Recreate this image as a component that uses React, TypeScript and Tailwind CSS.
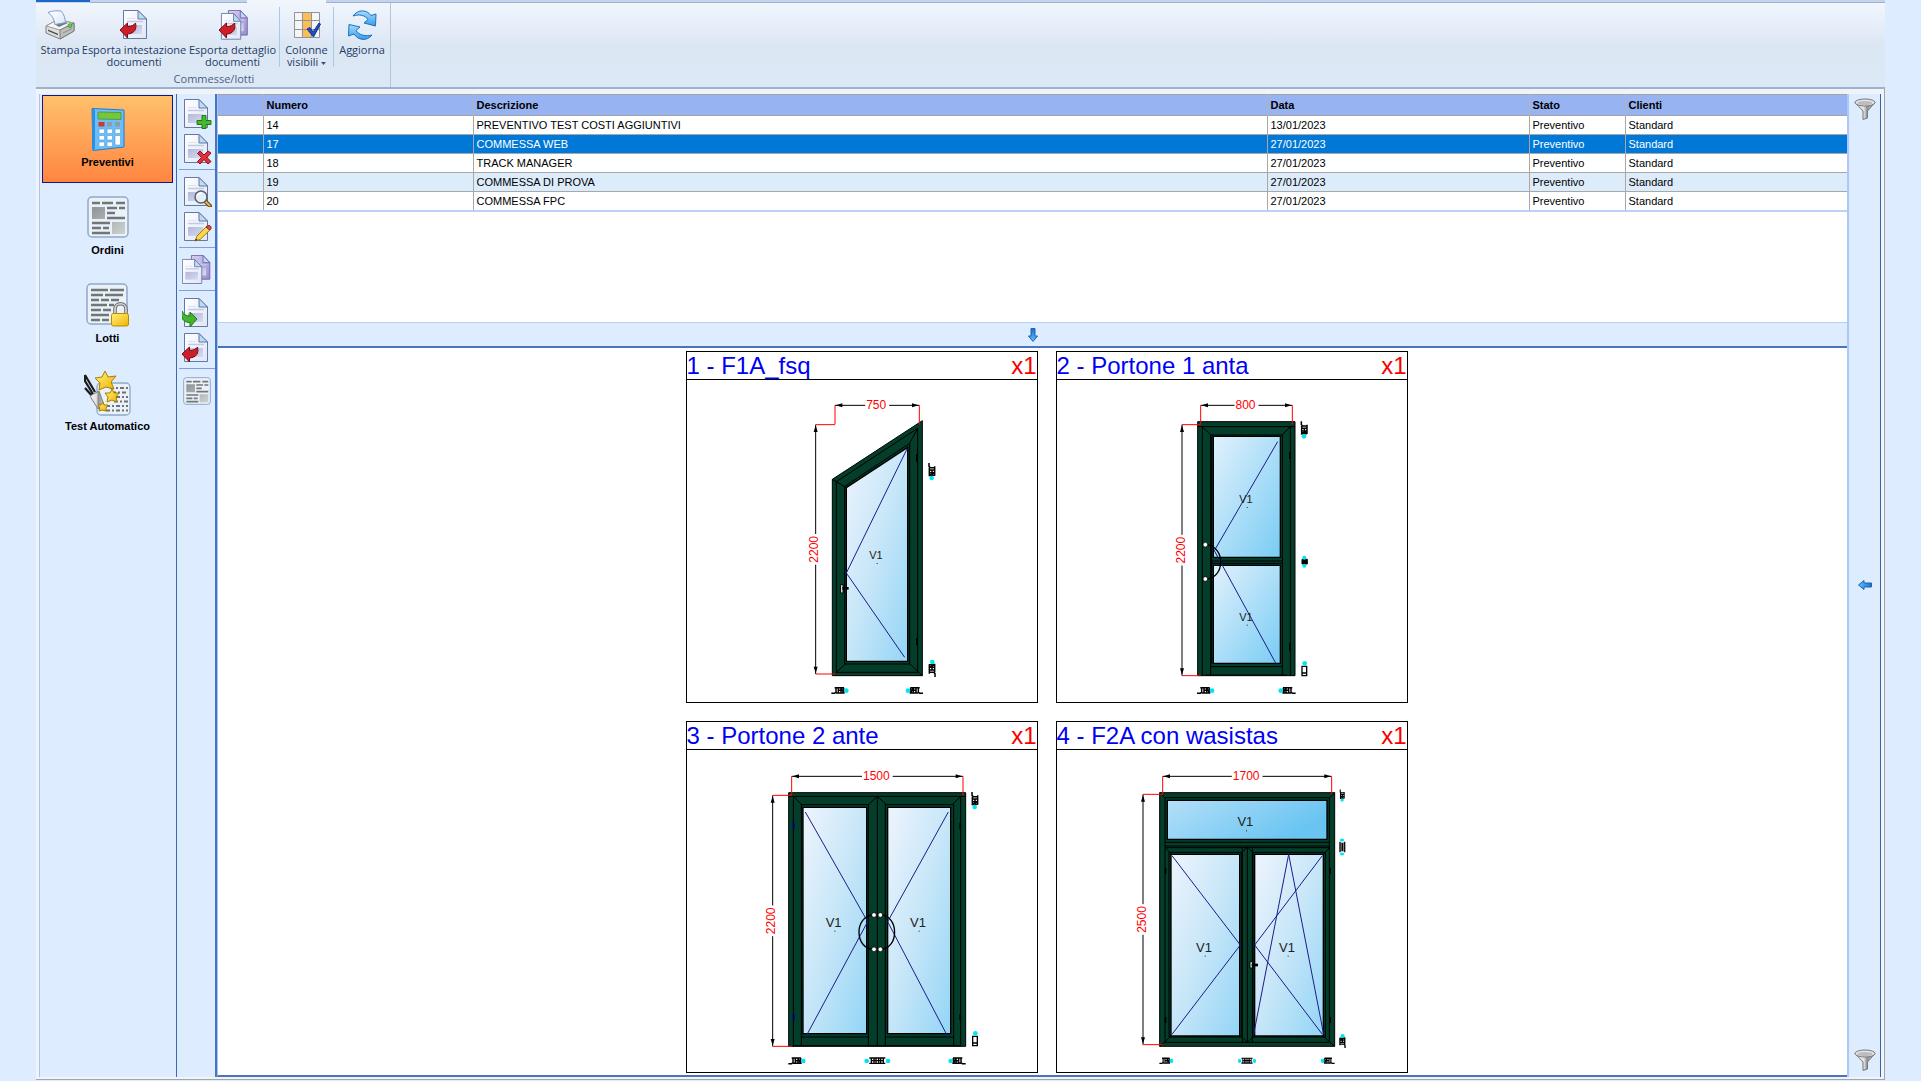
import React, { useState } from "react";

/* ---------- shared gradients ---------- */

function Defs() {
  return (
    <svg width="0" height="0" className="absolute" aria-hidden="true">
      <defs>
        <linearGradient id="paper" x1="0" y1="0" x2="1" y2="1">
          <stop offset="0" stopColor="#ffffff" />
          <stop offset="1" stopColor="#dfe6f6" />
        </linearGradient>
        <linearGradient id="violet" x1="0" y1="0" x2="1" y2="1">
          <stop offset="0" stopColor="#d9d0f2" />
          <stop offset="1" stopColor="#9d8bd0" />
        </linearGradient>
        <linearGradient id="block" x1="0" y1="0" x2="1" y2="1">
          <stop offset="0" stopColor="#b3b8da" />
          <stop offset="1" stopColor="#d6daf0" />
        </linearGradient>
        <linearGradient id="sky" x1="0" y1="0" x2="0" y2="1">
          <stop offset="0" stopColor="#a4dcff" />
          <stop offset="1" stopColor="#3a9bea" />
        </linearGradient>
        <linearGradient id="arrowBlue" x1="0" y1="0" x2="0" y2="1">
          <stop offset="0" stopColor="#1f6fc4" />
          <stop offset="1" stopColor="#5cc0ff" />
        </linearGradient>
        <linearGradient id="metal" x1="0" y1="0" x2="1" y2="0">
          <stop offset="0" stopColor="#f4f4f4" />
          <stop offset="0.45" stopColor="#e2e2e2" />
          <stop offset="0.6" stopColor="#8e8e8e" />
          <stop offset="1" stopColor="#d4d4d4" />
        </linearGradient>
        <linearGradient id="gold" x1="0" y1="0" x2="1" y2="1">
          <stop offset="0" stopColor="#fff27a" />
          <stop offset="1" stopColor="#f2b200" />
        </linearGradient>
        <linearGradient id="grayBlock" x1="0" y1="0" x2="1" y2="1">
          <stop offset="0" stopColor="#8f9596" />
          <stop offset="1" stopColor="#cdd1d2" />
        </linearGradient>
        <linearGradient id="glass" x1="0" y1="0" x2="1" y2="1">
          <stop offset="0" stopColor="#eef4fd" />
          <stop offset="0.5" stopColor="#c6e6f8" />
          <stop offset="1" stopColor="#93d5f6" />
        </linearGradient>
        <linearGradient id="glassDeep" x1="0" y1="0" x2="1" y2="1">
          <stop offset="0" stopColor="#e2f1fc" />
          <stop offset="1" stopColor="#78ccf4" />
        </linearGradient>
        <linearGradient id="glassTop" x1="0" y1="0" x2="1" y2="0.4">
          <stop offset="0" stopColor="#b4dff8" />
          <stop offset="1" stopColor="#69c4f2" />
        </linearGradient>
      </defs>
    </svg>
  );
}

/* ---------- icons ---------- */

function Sheet({ violet = false }: { violet?: boolean }) {
  const edge = violet ? "#6a58a8" : "#6577a3";
  return (
    <g>
      <path d="M.5.5H15L23.500 9V28.500H.5z" fill={violet ? "url(#violet)" : "url(#paper)"} stroke={edge} />
      <path d="M15 .5V9h8.500z" fill="#b9ddf4" stroke={edge} />
      <path d="M4 11.500h16" stroke="#c3c9e4" strokeWidth="1.500" />
      <path d="M4 8.500h8" stroke="#dde1f0" />
      <path d="M4 15h15v9H4z" fill="url(#block)" />
    </g>
  );
}

function RedArrow() {
  return (
    <path
      d="M.5 8 8 1v3.500c4 0 6-1 8-3.500 1.500 6-1 10.500-8 11V16z"
      fill="#cc1f2a"
      stroke="#7c0a14"
      strokeLinejoin="round"
    />
  );
}

function GreenArrow() {
  return (
    <path
      d="M16 9 9 2v4C5 6 2.500 4.500 1 1-.5 8 2 12.500 9 12.500V17z"
      fill="#42b52c"
      stroke="#1f7a17"
      strokeLinejoin="round"
    />
  );
}

function ToolIcon({ kind }: { kind: string }) {
  if (kind === "news") return <NewsIcon className="size-7" />;
  return (
    <svg viewBox="0 0 30 30" className="size-[30px]" aria-hidden="true">
      {kind === "copy" ? (
        <>
          <g transform="translate(9 0) scale(.8 .85)">
            <Sheet violet />
          </g>
          <g transform="translate(0 4) scale(.84 .86)">
            <Sheet />
          </g>
        </>
      ) : (
        <g transform="translate(2 0)">
          <Sheet />
        </g>
      )}
      {kind === "add" && (
        <path d="M20 16.500h4v5h5v4h-5v4h-4v-4h-5v-4h5z" fill="#45bb2b" stroke="#1c7a17" />
      )}
      {kind === "delete" && (
        <path
          d="m18 17 4 4 4-4 3 2-4 4.500 4 4-3 2.500-4-4.500-4 4.500-2.500-2.500 4-4-4-4z"
          fill="#e0303a"
          stroke="#93101a"
        />
      )}
      {kind === "search" && (
        <>
          <path d="m23 24 5 5" stroke="#6b4a18" strokeWidth="4" strokeLinecap="round" />
          <path d="m23.500 24.500 4 4" stroke="#e8b048" strokeWidth="2" strokeLinecap="round" />
          <circle cx="19" cy="20" r="6" fill="#e4effb" stroke="#59616b" strokeWidth="1.500" />
          <path d="M15.500 19c.5-2 2-3 4-3" stroke="#fff" strokeWidth="1.500" fill="none" />
        </>
      )}
      {kind === "edit" && (
        <>
          <path d="m13 29 2-5L25 14l3.500 3.500L18 27.500z" fill="#f9d84a" stroke="#a8780a" />
          <path d="m24 15 2-1.500c2-.5 3.500 1 3 3L27.500 18z" fill="#d94a4a" stroke="#8c2222" />
          <path d="m13 29 1-2.500 1.500 1.500z" fill="#333" />
        </>
      )}
      {kind === "import" && (
        <g transform="translate(-1 12)">
          <GreenArrow />
        </g>
      )}
      {kind === "export" && (
        <g transform="translate(-.5 13)">
          <RedArrow />
        </g>
      )}
    </svg>
  );
}

function PrinterIcon() {
  return (
    <svg viewBox="0 0 30 30" className="size-[30px]" aria-hidden="true">
      <path d="M1 16 12 10l17 3v8L15 29 1 23z" fill="#dedede" stroke="#808080" strokeLinejoin="round" />
      <path d="M1 16 12 10l17 3-14 7z" fill="#f7f7f7" stroke="#9a9a9a" strokeLinejoin="round" />
      <path d="m15 20 14-7v8l-14 8z" fill="#bdbdbd" stroke="#7c7c7c" strokeLinejoin="round" />
      <path d="m9 14 10-2.500 4 1.500-9 4z" fill="#6f7b86" />
      <path d="M10 14.500C9 9 7 5 3 2.500 8 .5 12 .5 16 1c3 3 4 7 4.500 11.500z" fill="url(#paper)" stroke="#7aa2cf" strokeLinejoin="round" />
      <path d="m3 19.500 10 4.300v1.500L3 21z" fill="#4f4f4f" />
      <path d="m18 23 9-4.500" stroke="#8d8d8d" />
      <circle cx="25" cy="15.500" r="2" fill="#5ccf3a" stroke="#2d8a1d" strokeWidth=".6" />
    </svg>
  );
}

function ExportHeadIcon() {
  return (
    <svg viewBox="0 0 30 30" className="size-[30px]" aria-hidden="true">
      <g transform="translate(4 0)">
        <Sheet />
      </g>
      <g transform="translate(.5 12)">
        <RedArrow />
      </g>
    </svg>
  );
}

function ExportDetailIcon() {
  return (
    <svg viewBox="0 0 30 30" className="size-[30px]" aria-hidden="true">
      <g transform="translate(10 0) scale(.82 .88)">
        <Sheet violet />
      </g>
      <g transform="translate(3 3) scale(.84 .92)">
        <Sheet />
      </g>
      <g transform="translate(.5 12)">
        <RedArrow />
      </g>
    </svg>
  );
}

function ColumnsIcon() {
  return (
    <svg viewBox="0 0 30 30" className="size-[30px]" aria-hidden="true">
      <path d="M2 2h26v26H2z" fill="#f5f6f8" />
      <path d="M11 2h8v26h-8z" fill="#fbbd55" />
      <path d="M2.500 2.500h25v25h-25zM10.500 2v26M19.500 2v26M2 10.500h26M2 19.500h26" fill="none" stroke="#8f939b" />
      <path d="m15 19 3-1.500 3 4.500 6-9 1.500 1L21.500 27z" fill="#1d50c4" stroke="#0f3390" />
    </svg>
  );
}

function RefreshIcon() {
  return (
    <svg viewBox="0 0 30 30" className="size-[30px]" aria-hidden="true">
      <path
        d="M6 6C11-1 20-.5 24 5.500L29 4l-.5 12L17 13l4-3.500C18 5 12 4 6 6z"
        fill="url(#sky)"
        stroke="#1d6fc0"
        strokeLinejoin="round"
      />
      <path
        d="M25 25c-5 6.500-14 5.500-18-1L1.500 26 2 14.500 13 17l-4 3.500c3 5 10 6 16 4.500z"
        fill="url(#sky)"
        stroke="#1d6fc0"
        strokeLinejoin="round"
      />
    </svg>
  );
}

function CalculatorIcon() {
  const keys = [0, 1, 2];
  return (
    <svg viewBox="0 0 34 44" className="h-11 w-[34px]" aria-hidden="true">
      <path d="M1 1.500 33 3v37L2 43.500z" fill="#6dbdf8" stroke="#1b7cd0" />
      <path d="M1 1.500 4 3v39l-3 1z" fill="#2b8fe2" />
      <path d="M7 5 30 5.500v7L7 12z" fill="#76c63c" stroke="#3f8d28" strokeWidth=".7" />
      <path d="M7.500 15h6v4.500h-6z" fill="#cc3a2a" />
      <path d="M16 15h5v4.500h-5zM24 15h5v4.500h-5z" fill="#8f9dab" />
      {keys.map((r) =>
        keys.map((c) =>
          r > 0 && c === 2 ? null : (
            <rect key={r + "-" + c} x={8 + c * 8} y={22 + r * 6.5} width="5.500" height="4.500" rx="1" fill="#fff" stroke="#3d8ed6" strokeWidth=".5" />
          ),
        ),
      )}
      <rect x="24" y="28.500" width="5.500" height="9.500" rx="1" fill="#fff" stroke="#3d8ed6" strokeWidth=".5" />
    </svg>
  );
}

function NewsIcon({ className }: { className: string }) {
  return (
    <svg viewBox="0 0 42 42" className={className} aria-hidden="true">
      <rect x="1" y="1" width="40" height="40" rx="4" fill="#eaf1f8" stroke="#8fa9c8" strokeWidth="1.500" />
      <path
        d="M5 7h8M15 7h11M29 7h9M20 12h10M32 12h6M20 17h8M20 22h18M5 27h18M5 32h9M16 32h6M5 37h18"
        stroke="#707778"
        strokeWidth="2.400"
      />
      <path d="M5 11h13v12H5zM25 26h13v12H25z" fill="url(#grayBlock)" />
    </svg>
  );
}

function LotsIcon() {
  return (
    <svg viewBox="0 0 44 44" className="size-11" aria-hidden="true">
      <rect x="1" y="1" width="40" height="40" rx="4" fill="#eaf1f8" stroke="#8fa9c8" strokeWidth="1.500" />
      <path
        d="M5 7h17M24 7h14M5 12h12M19 12h18M5 17h8M15 17h8M25 17h8M5 22h16M23 22h5M5 27h10M17 27h8M5 32h18M5 37h9M16 37h7"
        stroke="#707778"
        strokeWidth="2.400"
      />
      <path d="M29 31v-5c0-7 11-7 11 0v5" fill="none" stroke="#6f6f6f" strokeWidth="3.600" />
      <path d="M29 31v-5c0-7 11-7 11 0v5" fill="none" stroke="#d8d8d8" strokeWidth="1.600" />
      <rect x="25.500" y="30.500" width="17" height="12.500" rx="2" fill="url(#gold)" stroke="#b98a00" />
    </svg>
  );
}

function AutoTestIcon() {
  return (
    <svg viewBox="0 0 47 46" className="h-[46px] w-[47px]" aria-hidden="true">
      <rect x="13" y="13" width="33" height="32" rx="4" fill="#eaf1f8" stroke="#8fa9c8" strokeWidth="1.300" />
      <path
        d="M26 18h18M28 22.500h16M32 27h12M30 31.500h14M22 36h22M22 40.500h22"
        stroke="#6d7475"
        strokeWidth="2"
        strokeDasharray="4 2 2 2"
      />
      <path d="m1 5 10 17M1 18l8 9M1 5v6l8 13" stroke="#1c1c1c" strokeWidth="2.200" fill="none" />
      <path d="m6 26 9-5 5 14-6 4z" fill="url(#metal)" stroke="#7d7d7d" />
      <path d="m21 1 3 6 8-1-5 6 3 7-8-2-7 3 1-7-5-5 7-1z" fill="url(#gold)" stroke="#ab7f00" strokeLinejoin="round" />
      <path d="m28 19 2 4 5 0-3 4 1 5-5-2-5 2 1-5-3-4 5 0z" fill="url(#gold)" stroke="#ab7f00" strokeLinejoin="round" />
      <path d="m19 32 1 3 4 0-2 3 0 3-4-1-3 1 1-3-2-3 3 0z" fill="url(#gold)" stroke="#ab7f00" strokeLinejoin="round" />
    </svg>
  );
}

function FunnelIcon() {
  return (
    <svg viewBox="0 0 22 23" className="h-[23px] w-[22px]" aria-hidden="true">
      <path d="M1 4.500 9 13v8.500l4.500-1.500v-7L21 4.500z" fill="url(#metal)" stroke="#777" />
      <ellipse cx="11" cy="4.500" rx="10" ry="3.500" fill="#e6e6e6" stroke="#777" />
      <ellipse cx="11" cy="5" rx="7.500" ry="2" fill="#bdbdbd" />
    </svg>
  );
}

function BlueArrow({ left = false }: { left?: boolean }) {
  return (
    <svg viewBox="0 0 10 14" className={left ? "h-3.5 w-2.5 rotate-90" : "h-3.5 w-2.5"} aria-hidden="true">
      <path d="M3 .5h4V8h2.500L5 13.500.5 8H3z" fill="url(#arrowBlue)" stroke="#1c63b4" />
    </svg>
  );
}

/* ---------- window drawings (three drawing units per screen pixel) ---------- */

const GREEN = "#053d2b";
const NAVY = "#1c1c8c";

function Frame({ d, w = 3 }: { d: string; w?: number }) {
  return <path d={d} fill={GREEN} stroke="#000" strokeWidth={w} />;
}

function Pane({ d, deep = false }: { d: string; deep?: boolean }) {
  return <path d={d} fill={deep ? "url(#glassDeep)" : "url(#glass)"} stroke="#000" strokeWidth="4" />;
}

function Seam({ d }: { d: string }) {
  return <path d={d} fill="none" stroke="#000" strokeWidth="3" />;
}

function Opening({ d }: { d: string }) {
  return <path d={d} fill="none" stroke={NAVY} strokeWidth="3" />;
}

function GlassLabel({ x, y, size = 39 }: { x: number; y: number; size?: number }) {
  return (
    <g>
      <text x={x} y={y} fontSize={size} textAnchor="middle" fill="#222">
        V1
      </text>
      <rect x={x + 2} y={y + 12} width="3" height="3" fill="#222" />
    </g>
  );
}

function WidthDim({ x1, x2, y, drop, label }: { x1: number; x2: number; y: number; drop: number; label: string }) {
  const mid = (x1 + x2) / 2;
  const half = label.length * 10 + 6;
  return (
    <g>
      <path d={`M${x1} ${y}H${mid - half}M${mid + half} ${y}H${x2}`} stroke="#000" strokeWidth="3" />
      <path d={`M${x1 + 2} ${y}l20-6v12zM${x2 - 2} ${y}l-20-6v12z`} />
      <path d={`M${x1} ${y}V${drop}M${x2} ${y}V${drop}`} stroke="#f00" strokeWidth="3" />
      <text x={mid - 3} y={y + 10} fontSize="36" textAnchor="middle" fill="#f00">
        {label}
      </text>
    </g>
  );
}

function HeightDim({ x, y1, y2, reach, label }: { x: number; y1: number; y2: number; reach: number; label: string }) {
  const mid = (y1 + y2) / 2;
  return (
    <g>
      <path d={`M${x} ${y1}V${mid - 46}M${x} ${mid + 46}V${y2}`} stroke="#000" strokeWidth="3" />
      <path d={`M${x} ${y1 + 2}l-6 20h12zM${x} ${y2 - 2}l-6-20h12z`} />
      <path d={`M${x} ${y1}H${reach}M${x} ${y2}H${reach}`} stroke="#f00" strokeWidth="3" />
      <text transform={`translate(${x + 8} ${mid}) rotate(-90)`} fontSize="36" textAnchor="middle" fill="#f00">
        {label}
      </text>
    </g>
  );
}

/* Profile cross-section seen from the end, with its gasket dots. */
function Profile({ x, y, turn = 0, flip = false, kind = "full" }: { x: number; y: number; turn?: number; flip?: boolean; kind?: "full" | "plain" | "mid" }) {
  return (
    <g transform={`translate(${x} ${y}) rotate(${turn}) scale(${flip ? -1 : 1} 1)`}>
      {kind === "mid" ? (
        <>
          <path d="M-24-8h48M-24 8h48M-18-8v16M-10-8v16M-4-8v16M4-8v16M10-8v16M18-8v16M-18 0h36" stroke="#000" strokeWidth="4" />
          <circle cx="-32" cy="1" r="7" fill="#00e5f0" />
        </>
      ) : kind === "plain" ? (
        <path d="M-18-7h28v14h-28zM-10-7v14" fill="none" stroke="#000" strokeWidth="4" />
      ) : (
        <path
          d="M-26 9h10l5-5M-16-8h28M-12 8h26M-12-8V8M-5-8V8M-5 0h8M3-8V8M3-8l8 16M11-8V8"
          fill="none"
          stroke="#000"
          strokeWidth="4.500"
        />
      )}
      <circle cx={kind === "mid" ? 32 : 19} cy="1" r="7" fill="#00e5f0" />
    </g>
  );
}

function Drawing({ top, title, children }: { top: number; title: string; children: React.ReactNode }) {
  return (
    <svg
      viewBox={`24 ${top} 1050 966`}
      className="block h-[322px] w-full"
      fontFamily="Liberation Sans, Arial, sans-serif"
      role="img"
      aria-label={title}
    >
      {children}
    </svg>
  );
}

function SlantedWindow() {
  return (
    <>
      <Frame d="M460 403 730 227V992H460z" />
      <Seam d="M472 410 716 250V982H472zM460 403l40 24M472 982l28-26M716 250l-24 45M730 992l-38-36" />
      <Seam d="M497 424 692 295V957H497z" />
      <Pane d="M502 428 686 307V949H502z" />
      <Opening d="M684 312 502 684 677 937" />
      <GlassLabel x={591} y={642} size={33} />
      <path d="M485 719h7v25h-7z" fill="#fff" stroke="#000" strokeWidth="3" />
      <path d="M490 726h19v8h-19z" />
      <path d="M711 328h5v22h-5zM711 880h5v20h-5z" />
      <WidthDim x1={468} x2={721} y={181} drop={238} label="750" />
      <HeightDim x={410} y1={239} y2={987} reach={468} label="2200" />
      <Profile x={759} y={380} turn={90} />
      <Profile x={759} y={970} turn={-90} />
      <Profile x={483} y={1036} />
      <Profile x={706} y={1036} flip />
    </>
  );
}

function SingleDoor() {
  return (
    <>
      <Frame d="M446 230H738V992H446z" />
      <Seam d="M446 245H738M460 245V992M724 245V992M460 245l25 25M724 245l-25 25M485 270H700V990M485 270V990M470 990H714" />
      <Pane deep d="M493 274H694V637H493z" />
      <Pane deep d="M493 661H694V955H493z" />
      <Seam d="M485 648H700M485 655H700M485 965H700M488 274V955" />
      <Opening d="M686 290 496 617 686 965" />
      <GlassLabel x={591} y={474} size={33} />
      <GlassLabel x={591} y={827} size={33} />
      <path d="M470 600C530 600 530 702 470 702" fill="none" stroke="#000" strokeWidth="4" />
      <circle cx="469" cy="599" r="7" fill="#fff" stroke="#000" strokeWidth="2" />
      <circle cx="469" cy="702" r="7" fill="#fff" stroke="#000" strokeWidth="2" />
      <path d="M720 320h4v22h-4zM720 895h4v22h-4z" />
      <WidthDim x1={455} x2={730} y={181} drop={238} label="800" />
      <HeightDim x={399} y1={239} y2={992} reach={455} label="2200" />
      <Profile x={766} y={255} turn={90} />
      <path d="M759 643h16v14h-16z" stroke="#000" strokeWidth="3" />
      <circle cx="766" cy="638" r="6" fill="#00e5f0" />
      <circle cx="766" cy="662" r="6" fill="#00e5f0" />
      <Profile x={766} y={974} turn={-90} kind="plain" />
      <Profile x={470} y={1036} />
      <Profile x={714} y={1036} flip />
    </>
  );
}

function DoubleDoor() {
  return (
    <>
      <Frame d="M329 245H860V1006H329z" />
      <Seam d="M329 256H860M343 256V1006M845 256V1006M595 256V1004M343 256l26 26M845 256l-26 26M595 256l-28 26M595 256l28 26" />
      <Seam d="M367 281H568V1004M367 281V1004M619 281H824V1004M619 281V1004M343 1004H845M367 978H568M619 978H824" />
      <Pane d="M372 289H563V968H372z" />
      <Pane d="M626 289H815V968H626z" />
      <Opening d="M379 303 566 632 379 980M808 303 626 632 808 980" />
      <GlassLabel x={464} y={647} />
      <GlassLabel x={717} y={647} />
      <path d="M585 612C525 612 525 715 585 715M604 612C661 612 661 715 604 715" fill="none" stroke="#000" strokeWidth="4" />
      {[612, 715].map((y) => (
        <g key={y} fill="#fff" stroke="#000" strokeWidth="2">
          <circle cx="585" cy={y} r="7" />
          <circle cx="604" cy={y} r="7" />
        </g>
      ))}
      <path d="M341 336h6v18h-6zM341 910h6v18h-6z" fill="#00007c" />
      <path d="M841 336h5v18h-5zM841 910h5v18h-5z" />
      <WidthDim x1={338} x2={852} y={196} drop={254} label="1500" />
      <HeightDim x={281} y1={253} y2={1006} reach={338} label="2200" />
      <Profile x={888} y={269} turn={90} />
      <Profile x={888} y={986} turn={-90} kind="plain" />
      <Profile x={354} y={1049} />
      <Profile x={595} y={1049} kind="mid" />
      <Profile x={834} y={1049} flip />
    </>
  );
}

function TransomWindow() {
  return (
    <>
      <Frame d="M332 245H857V1006H332z" />
      <Seam d="M332 245l16 16M857 245l-16 16M348 260H841V994H348zM348 394H841M348 405H841M332 1006l34-30M857 1006l-34-30" />
      <path d="M355 268H834V385H355z" fill="url(#glassTop)" stroke="#000" strokeWidth="4" />
      <Seam d="M350 410H841M360 424H578V978H360zM612 424H829V978H612zM595 408V994M580 408V994M610 408V994M350 410l16 20M595 408l-20 20M595 408l20 20M841 410l-16 20M595 994l-20-18M595 994l20-18" />
      <Pane d="M366 430H572V975H366z" />
      <Pane d="M617 430H823V975H617z" />
      <Opening d="M369 434 574 702 369 970M820 434 617 702 820 970M614 970 719 430 824 970" />
      <GlassLabel x={589} y={346} />
      <GlassLabel x={465} y={722} />
      <GlassLabel x={714} y={722} />
      <path d="M603 752h7v19h-7z" fill="#fff" stroke="#000" strokeWidth="3" />
      <path d="M608 758h19v8h-19z" />
      <path d="M347 470h5v18h-5zM841 470h5v18h-5zM347 918h5v18h-5zM841 918h5v18h-5z" />
      <WidthDim x1={341} x2={848} y={196} drop={250} label="1700" />
      <HeightDim x={282} y1={250} y2={1001} reach={341} label="2500" />
      <g transform="translate(880 254) scale(.7 .7)">
        <Profile x={0} y={0} turn={90} />
      </g>
      <g transform="translate(880 408) scale(.9 .65)">
        <Profile x={0} y={0} turn={90} kind="mid" />
      </g>
      <g transform="translate(880 990) scale(.9 .8)">
        <Profile x={0} y={0} turn={-90} />
      </g>
      <g transform="translate(352 1049) scale(.8 .9)">
        <Profile x={0} y={0} />
      </g>
      <g transform="translate(594 1049) scale(.7 .9)">
        <Profile x={0} y={0} kind="mid" />
      </g>
      <g transform="translate(836 1049) scale(.8 .9)">
        <Profile x={0} y={0} flip />
      </g>
    </>
  );
}

/* ---------- data ---------- */

const rows = [
  { numero: "14", descrizione: "PREVENTIVO TEST COSTI AGGIUNTIVI", data: "13/01/2023" },
  { numero: "17", descrizione: "COMMESSA WEB", data: "27/01/2023" },
  { numero: "18", descrizione: "TRACK MANAGER", data: "27/01/2023" },
  { numero: "19", descrizione: "COMMESSA DI PROVA", data: "27/01/2023" },
  { numero: "20", descrizione: "COMMESSA FPC", data: "27/01/2023" },
];

const sections = [
  { label: "Preventivi", icon: <CalculatorIcon /> },
  { label: "Ordini", icon: <NewsIcon className="size-[42px]" /> },
  { label: "Lotti", icon: <LotsIcon /> },
  { label: "Test Automatico", icon: <AutoTestIcon /> },
];

const toolGroups = [
  [
    { kind: "add", label: "Nuovo" },
    { kind: "delete", label: "Elimina" },
  ],
  [
    { kind: "search", label: "Visualizza" },
    { kind: "edit", label: "Modifica" },
  ],
  [{ kind: "copy", label: "Duplica" }],
  [
    { kind: "import", label: "Importa" },
    { kind: "export", label: "Esporta" },
  ],
  [{ kind: "news", label: "Dettagli" }],
];

const cards = [
  { title: "1 - F1A_fsq", top: 105, art: <SlantedWindow /> },
  { title: "2 - Portone 1 anta", top: 105, art: <SingleDoor /> },
  { title: "3 - Portone 2 ante", top: 117, art: <DoubleDoor /> },
  { title: "4 - F2A con wasistas", top: 117, art: <TransomWindow /> },
];

/* ---------- layout ---------- */

function RibbonButton({ width, icon, children }: { width: string; icon: React.ReactNode; children: React.ReactNode }) {
  return (
    <button type="button" className={`${width} flex flex-col items-center gap-1 pt-[7px] text-center`}>
      {icon}
      <span className="whitespace-nowrap">{children}</span>
    </button>
  );
}

function RibbonRule() {
  return <div className="mt-1 h-[60px] w-px bg-[#a9c8ec]" />;
}

function Ribbon() {
  return (
    <header className="shrink-0">
      <div className="flex h-[3px] bg-[#c3d5ee]">
        <div className="h-0.5 w-[54px] bg-[#1c67c8]" />
        <div className="w-[157px] border-b border-[#9db2d2]" />
        <div className="w-[79px] bg-[#f1f6fd]" />
        <div className="flex-1 border-b border-[#9db2d2]" />
      </div>
      <div className="flex border-b-2 border-[#9bb1cf] bg-linear-to-b from-[#f1f6fd] via-[#dce7f4] to-[#dce8f5] font-['Open_Sans',sans-serif] text-[11px] leading-[12px] text-[#1e3a66]">
        <section className="flex h-[84px] flex-col border-r border-[#b4c6dd] pl-0.5" aria-label="Commesse/lotti">
          <div className="flex">
            <RibbonButton width="w-11" icon={<PrinterIcon />}>
              Stampa
            </RibbonButton>
            <RibbonButton width="w-[104px]" icon={<ExportHeadIcon />}>
              Esporta intestazione
              <br />
              documenti
            </RibbonButton>
            <RibbonButton width="w-[93px]" icon={<ExportDetailIcon />}>
              Esporta dettaglio
              <br />
              documenti
            </RibbonButton>
            <RibbonRule />
            <RibbonButton width="w-[53px]" icon={<ColumnsIcon />}>
              Colonne
              <br />
              visibili{" "}
              <svg viewBox="0 0 5 3" className="inline h-[3px] w-[5px] align-middle" aria-hidden="true">
                <path d="M0 0h5L2.500 3z" fill="#3c5274" />
              </svg>
            </RibbonButton>
            <RibbonRule />
            <RibbonButton width="w-14" icon={<RefreshIcon />}>
              Aggiorna
            </RibbonButton>
          </div>
          <div className="mt-auto pb-0.5 text-center text-[#4a5f86]">Commesse/lotti</div>
        </section>
      </div>
    </header>
  );
}

function Sidebar({ active, onSelect }: { active: number; onSelect: (i: number) => void }) {
  return (
    <nav className="flex w-[138px] shrink-0 flex-col border-r border-l border-r-[#3d69b2] border-l-[#a9c2f2] bg-[#ddecfe] pt-px pr-[3px] pl-0.5">
      {sections.map((s, i) => (
        <button
          key={s.label}
          type="button"
          aria-pressed={i === active}
          onClick={() => onSelect(i)}
          className={
            "flex h-[88px] flex-col items-center gap-0.5 border pt-[9px] text-[11px] leading-[14px] font-bold text-black " +
            (i === active
              ? "border-[#14148c] bg-linear-to-b from-[#ffc06c] to-[#ff8540]"
              : "border-transparent")
          }
        >
          <span className="flex h-12 items-center">{s.icon}</span>
          <span>{s.label}</span>
        </button>
      ))}
    </nav>
  );
}

function Toolbar() {
  return (
    <div role="toolbar" aria-label="Azioni" className="flex w-10 shrink-0 flex-col border-r-2 border-[#4674bd] bg-[#ddecfe] pl-0.5">
      {toolGroups.map((group, g) => (
        <div
          key={g}
          className={"flex flex-col items-center pb-[3px] " + (g > 0 ? "border-t border-[#7f9fdc] pt-1" : "pt-0.5")}
        >
          {group.map((t) => (
            <button key={t.kind} type="button" aria-label={t.label} className="flex h-[35px] items-center justify-center">
              <ToolIcon kind={t.kind} />
            </button>
          ))}
        </div>
      ))}
    </div>
  );
}

function JobsTable() {
  const [selected, setSelected] = useState(1);
  return (
    <div className="h-[228px] shrink-0 overflow-auto bg-white">
      <table className="h-[118px] w-full table-fixed border-collapse border-b-2 border-[#bcd0f8] text-left text-[11px] leading-[14px]">
        <colgroup>
          <col className="w-[45px]" />
          <col className="w-[210px]" />
          <col />
          <col className="w-[262px]" />
          <col className="w-24" />
          <col className="w-[222px]" />
        </colgroup>
        <thead>
          <tr className="h-[21px] border-t border-b border-[#a3a3a3] bg-[#97b3f1]">
            <th aria-label="Selezione" />
            {["Numero", "Descrizione", "Data", "Stato", "Clienti"].map((h) => (
              <th key={h} scope="col" className="border-l border-[#a9b4cc] px-[3px] font-bold">
                {h}
              </th>
            ))}
          </tr>
        </thead>
        <tbody>
          {rows.map((r, i) => (
            <tr
              key={r.numero}
              onClick={() => setSelected(i)}
              className={
                "h-[19px] border-b border-[#a8a8a8] last:border-[#bcd0f8] " +
                (i === selected ? "bg-[#0078d7] text-white" : i === 3 ? "bg-[#ddecfb]" : "bg-white")
              }
            >
              <td />
              {[r.numero, r.descrizione, r.data, "Preventivo", "Standard"].map((v, c) => (
                <td key={c} className="border-l border-[#a8a8a8] px-[3px]">
                  {v}
                </td>
              ))}
            </tr>
          ))}
        </tbody>
      </table>
    </div>
  );
}

function Preview() {
  return (
    <div className="flex flex-1 justify-center bg-white pt-[3px] pl-7">
      <div className="grid content-start grid-cols-[352px_352px] gap-x-[18px] gap-y-[18px]">
        {cards.map((c) => (
          <article key={c.title} className="border border-black">
            <h2 className="flex h-7 items-center justify-between border-b border-black text-[24px] leading-[26px] text-[#0000f5]">
              <span>{c.title}</span>
              <span className="text-[#f50000]">x1</span>
            </h2>
            <Drawing top={c.top} title={c.title}>
              {c.art}
            </Drawing>
          </article>
        ))}
      </div>
    </div>
  );
}

function FilterRail() {
  return (
    <aside className="flex w-[34px] shrink-0 flex-col items-center justify-between border-r border-l-2 border-r-[#3560ab] border-l-[#acc8fa] bg-[#ddecfe] pt-1 pb-[5px]">
      <button type="button" aria-label="Filtra">
        <FunnelIcon />
      </button>
      <button type="button" aria-label="Espandi filtri">
        <BlueArrow left />
      </button>
      <button type="button" aria-label="Filtra elementi">
        <FunnelIcon />
      </button>
    </aside>
  );
}

export default function App() {
  const [active, setActive] = useState(0);
  return (
    <div className="flex min-h-screen flex-col bg-[#ddecfe] px-9 pb-px font-['Liberation_Sans',Arial,sans-serif] text-black">
      <Defs />
      <Ribbon />
      <div className="flex flex-1 flex-col border-r border-b border-[#a2a4a6] bg-[#f0f4f9] pt-[5px] pr-[3px] pb-0.5 pl-[3px]">
        <div className="flex flex-1">
          <Sidebar active={active} onSelect={setActive} />
          <Toolbar />
          <main className="flex min-w-0 flex-1 flex-col border-b-2 border-l border-b-[#4674bd] border-l-[#a9c2f6]">
            <JobsTable />
            <button
              type="button"
              aria-label="Riduci pannello"
              className="flex h-[26px] shrink-0 items-center justify-center border-t border-b-2 border-t-[#b4d0f6] border-b-[#4674bd] bg-[#ddecfe]"
            >
              <BlueArrow />
            </button>
            <Preview />
          </main>
          <FilterRail />
        </div>
      </div>
    </div>
  );
}
